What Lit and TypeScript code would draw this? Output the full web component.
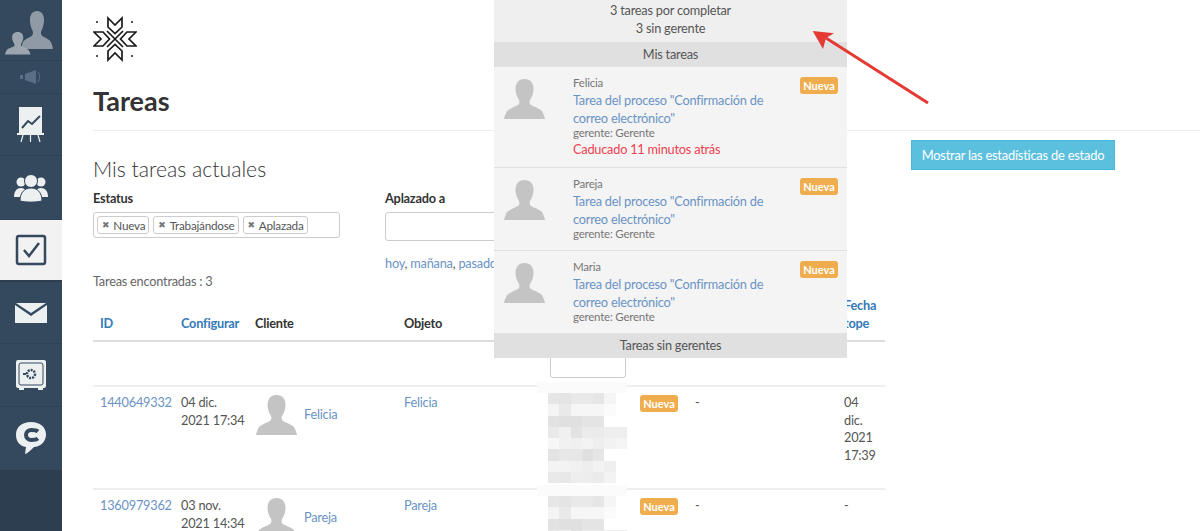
import { LitElement, html, css, svg } from "lit";
import { customElement } from "lit/decorators.js";

const person = svg`<path d="M20.500 0c-6 0-9 4-9 10 0 4 1.500 8 3.500 11 .7 1 .5 4-1 5-3 2-11 4-12 8-.7 2-1.600 3.500-2 6h41c-.4-2.500-1.300-4-2-6-1-4-9-6-12-8-1.500-1-1.700-4-1-5 2-3 3.500-7 3.500-11 0-6-3-10-9-10z"/>`;
const avatar = (size = 41) => html`<svg class="avatar" width=${size} height=${size} viewBox="0 0 41 41" fill="#c4c4c4">${person}</svg>`;

const mosaicA = [
  ["e6","e4","e9","e9","e6","f5","ff"],
  ["f4","e9","f6","f6","f6","fb","ff"],
  ["e2","e0","e0","e4","e4","ff","ff"],
  ["e9","f0","e3","eb","eb","ee","ee"],
  ["f7","f1","f0","f3","ee","f2","f5"],
  ["e3","e7","e7","e0","e6","ff","ff"],
  ["f3","f3","f1","ee","f3","ef","ff"],
  ["e9","e8","ee","ed","eb","f3","ff"],
];
const mosaic = (rows: string[][]) => html`<div class="mosaic-wrap"><div class="mosaic-band"></div><div class="mosaic">${rows.flat().map(c => html`<i style="background:#${c}${c}${c}"></i>`)}</div></div>`;

const tasks = [
  { name: "Felicia", late: true },
  { name: "Pareja", late: false },
  { name: "Maria", late: false },
];

@customElement("app-root")
export class AppRoot extends LitElement {
  static styles = css`
    :host { display: block; position: relative; width: 1200px; height: 531px; overflow: hidden; background: #fff;
      font-family: "Lato", "Open Sans", sans-serif; font-size: 12.750px; letter-spacing: -.22px; color: #555; }
    .page { display: flex; height: 531px; }
    .side { width: 62px; flex: none; background: #2c3e50; display: flex; flex-direction: column; }
    .nav { height: 62px; background: #34495e; border-bottom: 1px solid #2e4257; display: flex; align-items: center; justify-content: center; box-sizing: border-box; flex: none; }
    .nav.user { height: 61px; }
    .nav.sound { height: 33px; }
    .nav.team { height: 64px; }
    .nav.active { background: #f2f2f2; height: 62px; border-bottom: 2px solid #2c3e50; }
    .nav.safe { height: 63px; }
    .nav.chat { height: 63px; border-bottom: 0; }
    .main { flex: 1; padding-left: 31px; min-width: 0; }
    .logo { display: block; margin: 16px 0 0 0; }
    h1 { margin: 23px 0 0; font-size: 27px; line-height: 32px; font-weight: 700; color: #333; letter-spacing: 0; }
    .rule { height: 1px; background: #eee; margin-top: 13px; }
    .content { display: flex; }
    .left { width: 792px; flex: none; }
    .right { padding: 9px 0 0 26px; }
    .stats { box-sizing: border-box; width: 204px; height: 30px; border: 1px solid #46b8da; background: #5bc0de; color: #fff; font: inherit; letter-spacing: inherit; font-size: 12.900px; padding: 0; }
    h2 { margin: 25px 0 0; font-size: 21.200px; line-height: 26px; font-weight: 300; color: #333; letter-spacing: 0; }
    .filters { display: flex; margin-top: 7px; }
    .f1 { width: 247px; }
    .f2 { margin-left: 45px; width: 220px; }
    label { display: block; font-weight: 700; color: #333; line-height: 18px; }
    .tags { box-sizing: border-box; margin-top: 5px; height: 26px; border: 1px solid #ccc; border-radius: 3px; display: flex; gap: 4px; padding: 3px; align-items: flex-start; }
    .tag { border: 1px solid #ccc; border-radius: 3px; height: 18px; box-sizing: border-box; padding: 0 3px 0 4px; display: flex; align-items: center; gap: 4px; font-size: 11.700px; color: #555; }
    .tag b { font-size: 9px; color: #777; font-family: "DejaVu Sans", sans-serif; }
    .box { box-sizing: border-box; margin-top: 5px; height: 29px; border: 1px solid #ccc; border-radius: 3px; }
    .quick { margin-top: 13px; line-height: 18px; color: #555; }
    a { color: #6a93c4; text-decoration: none; }
    .found { line-height: 18px; color: #666; }
    table { margin-top: 6px; width: 792px; table-layout: fixed; border-collapse: separate; border-spacing: 0; }
    th { text-align: left; vertical-align: bottom; padding: 0 7px 8px; border-bottom: 2px solid #ddd; color: #333; font-weight: 700; line-height: 18px; }
    th a { color: #337ab7; }
    td { vertical-align: top; padding: 7px 7px 0; line-height: 17.600px; border-bottom: 2px solid #eee; }
    .date { white-space: nowrap; }
    tr.search td { height: 45px; box-sizing: border-box; padding-top: 6px; }
    tr.row td { height: 103px; box-sizing: border-box; }
    .search-box { box-sizing: border-box; height: 30px; width: 76px; margin-left: 2px; border: 1px solid #ccc; border-radius: 3px; }
    .client { display: flex; align-items: center; gap: 7px; margin: 1px 0 0 1px; }
    .client a { margin-top: -2px; }
    .avatar { display: block; flex: none; }
    .badge { display: block; box-sizing: border-box; height: 17px; width: 38px; text-align: center; background: #f0ad4e; color: #fff; font-weight: 700; font-size: 11px; letter-spacing: 0; line-height: 17px; border-radius: 3px; }
    td .badge { margin-top: 1px; }
    td.blur { padding: 0 0 0 7px; }
    .mosaic-wrap { margin-top: -5px; }
    .mosaic-band { height: 11px; width: 90px; background: #fbfbfb; margin-left: -11px; }
    .mosaic { display: grid; grid-template-columns: repeat(7, 11.300px); grid-auto-rows: 11.300px; }
    .panel { position: absolute; left: 494px; top: 0; width: 353px; height: 358px; background: #f4f4f4; display: flex; flex-direction: column; color: #555; }
    .head { height: 42px; flex: none; background: #efefef; text-align: center; line-height: 18px; padding-top: 1px; box-sizing: border-box; }
    .bar { height: 25px; flex: none; background: #e0e0e0; text-align: center; line-height: 25px; color: #555; }
    .item { position: relative; display: flex; flex: none; box-sizing: border-box; height: 83px; padding: 8px 9px 0 10px; border-bottom: 1px solid #e0e0e0; }
    .item.late { height: 101px; }
    .item.last { height: 82px; border-bottom: 0; }
    .item .avatar { margin-top: 4px; }
    .body { margin-left: 28px; flex: 1; }
    .who { font-size: 11.500px; line-height: 16px; margin-bottom: 1px; color: #777; }
    .title { line-height: 17.600px; color: #6a93c4; width: 210px; }
    .boss { font-size: 11.500px; line-height: 15px; margin-top: -2px; color: #777; }
    .late-text { color: #f0404e; line-height: 17px; margin-top: 1px; }
    .item .badge { flex: none; margin-top: 2px; }
    .arrow { position: absolute; left: 800px; top: 20px; pointer-events: none; }
  `;

  render() {
    return html`
      <div class="page">
        <aside class="side">
          <div class="nav user">
            <svg width="62" height="60" viewBox="0 0 62 60" fill="#8f9aa6">
              <g transform="translate(21 11) scale(.78 .95)">${person}</g>
              <g transform="translate(5 32) scale(.62 .56)" fill="#a5adb4" opacity=".92">${person}</g>
            </svg>
          </div>
          <div class="nav sound">
            <svg width="24" height="16" viewBox="0 0 24 16" fill="#5a6f85"><rect x="1" y="6" width="3" height="4"/><path d="M6 5l11-4v14L6 11z"/><path d="M19 3c2 3 2 7 0 10" stroke="#5a6f85" fill="none"/></svg>
          </div>
          <div class="nav">
            <svg width="28" height="36" viewBox="0 0 28 36"><rect x="2" y="0" width="23" height="26" fill="#ecf0f1"/><path d="M5 21l6-7 4 3 8-8" stroke="#34495e" stroke-width="2" fill="none"/><path d="M0 27h27" stroke="#ecf0f1" stroke-width="2"/><path d="M6 28l-2 7M13.500 28v7M21 28l2 7" stroke="#ecf0f1" stroke-width="1.200"/></svg>
          </div>
          <div class="nav team">
            <svg width="34" height="28" viewBox="0 0 34 28" fill="#ecf0f1"><circle cx="7" cy="8" r="4.500"/><circle cx="27" cy="8" r="4.500"/><path d="M0 23c0-6 3-9 7-9s6 3 6 9z"/><path d="M21 23c0-6 2-9 6-9s7 3 7 9z"/><circle cx="17" cy="7" r="6.500" stroke="#34495e"/><path d="M6 27c0-9 5-13 11-13s11 4 11 13c-6 1.500-16 1.500-22 0z" stroke="#34495e"/></svg>
          </div>
          <div class="nav active">
            <svg width="32" height="32" viewBox="0 0 32 32"><rect x="2" y="2" width="28" height="28" rx="2" fill="none" stroke="#34495e" stroke-width="2.500"/><path d="M9 16l5 6 10-13" fill="none" stroke="#34495e" stroke-width="2.500"/></svg>
          </div>
          <div class="nav">
            <svg width="32" height="20" viewBox="0 0 32 20" fill="#ecf0f1"><path d="M1 0l15 10L31 0z"/><path d="M0 2v18h32V2L16 13z"/></svg>
          </div>
          <div class="nav safe">
            <svg width="31" height="31" viewBox="0 0 31 31"><rect x="0" y="0" width="30" height="28" rx="2" fill="#ecf0f1"/><rect x="3" y="3" width="24" height="22" rx="2" fill="none" stroke="#34495e" stroke-width="1"/><circle cx="15" cy="14" r="4" fill="none" stroke="#34495e" stroke-width="2.500" stroke-dasharray="2 1"/><path d="M7 14h3" stroke="#34495e" stroke-width="2"/><path d="M3 28h5v2H3zM22 28h5v2h-5z" fill="#ecf0f1"/></svg>
          </div>
          <div class="nav chat">
            <svg width="30" height="33" viewBox="0 0 30 33"><path d="M15 0c9 0 15 5 15 12.500S24 25 18 25c-3 3-6 6-9 7l1-7C4 24 0 20 0 12.500 0 5 6 0 15 0z" fill="#ecf0f1"/><path d="M22 9.500C20.500 8.300 18 8 15.500 8 12 8 10 10 10 13s2 5 5.500 5c2.500 0 5-.3 6.500-1.500" fill="none" stroke="#34495e" stroke-width="4"/></svg>
          </div>
        </aside>
        <main class="main">
          <svg class="logo" width="44" height="46" viewBox="-22 -23 44 46" fill="none" stroke="#1a1a1a" stroke-width="1.700">
            ${[0, 90, 180, 270].map(r => svg`<path transform="rotate(${r})" d="M-7-21l7 7 7-7v9l-7 6.500-7-6.500z"/>`)}
            <path d="M-8-8L8 8M8-8L-8 8" />
            ${[[-18,-17],[17,-17],[-18,17],[17,17]].map(([x, y]) => svg`<circle cx=${x} cy=${y} r="1" fill="#1a1a1a" stroke="none"/>`)}
          </svg>
          <h1>Tareas</h1>
          <div class="rule"></div>
          <div class="content">
            <div class="left">
              <h2>Mis tareas actuales</h2>
              <div class="filters">
                <div class="f1">
                  <label>Estatus</label>
                  <div class="tags">
                    <span class="tag"><b>✖</b>Nueva</span>
                    <span class="tag"><b>✖</b>Trabajándose</span>
                    <span class="tag"><b>✖</b>Aplazada</span>
                  </div>
                </div>
                <div class="f2">
                  <label>Aplazado a</label>
                  <div class="box"></div>
                  <div class="quick"><a>hoy</a>, <a>mañana</a>, <a>pasado</a></div>
                </div>
              </div>
              <div class="found">Tareas encontradas : 3</div>
              <table>
                <colgroup><col style="width:81px"><col style="width:74px"><col style="width:149px"><col style="width:144px"><col style="width:92px"><col style="width:55px"><col style="width:149px"><col style="width:48px"></colgroup>
                <tr>
                  <th><a>ID</a></th><th><a>Configurar</a></th><th>Cliente</th><th>Objeto</th><th></th><th></th><th></th><th><a>Fecha tope</a></th>
                </tr>
                <tr class="search"><td></td><td></td><td></td><td></td><td><div class="search-box"></div></td><td></td><td></td><td></td></tr>
                <tr class="row">
                  <td><a>1440649332</a></td>
                  <td class="date">04 dic.<br>2021 17:34</td>
                  <td><div class="client">${avatar()}<a>Felicia</a></div></td>
                  <td><a>Felicia</a></td>
                  <td class="blur">${mosaic(mosaicA)}</td>
                  <td><span class="badge">Nueva</span></td>
                  <td>-</td>
                  <td>04 dic. 2021 17:39</td>
                </tr>
                <tr class="row">
                  <td><a>1360979362</a></td>
                  <td class="date">03 nov.<br>2021 14:34</td>
                  <td><div class="client">${avatar()}<a>Pareja</a></div></td>
                  <td><a>Pareja</a></td>
                  <td class="blur">${mosaic(mosaicA)}</td>
                  <td><span class="badge">Nueva</span></td>
                  <td>-</td>
                  <td>-</td>
                </tr>
              </table>
            </div>
            <div class="right"><button class="stats">Mostrar las estadísticas de estado</button></div>
          </div>
        </main>
      </div>
      <section class="panel">
        <div class="head">3 tareas por completar<br>3 sin gerente</div>
        <div class="bar">Mis tareas</div>
        ${tasks.map((t, i) => html`
          <div class="item ${t.late ? "late" : ""} ${i === 2 ? "last" : ""}">
            ${avatar()}
            <div class="body">
              <div class="who">${t.name}</div>
              <div class="title">Tarea del proceso "Confirmación de correo electrónico"</div>
              <div class="boss">gerente: Gerente</div>
              ${t.late ? html`<div class="late-text">Caducado 11 minutos atrás</div>` : ""}
            </div>
            <span class="badge">Nueva</span>
          </div>`)}
        <div class="bar">Tareas sin gerentes</div>
      </section>
      <svg class="arrow" width="140" height="90" viewBox="0 0 140 90">
        <path d="M128 83L26 18" stroke="#e53a33" stroke-width="3"/>
        <path d="M12.700 11L34 13.300 26 18 23 29z" fill="#e53a33"/>
      </svg>
    `;
  }
}
